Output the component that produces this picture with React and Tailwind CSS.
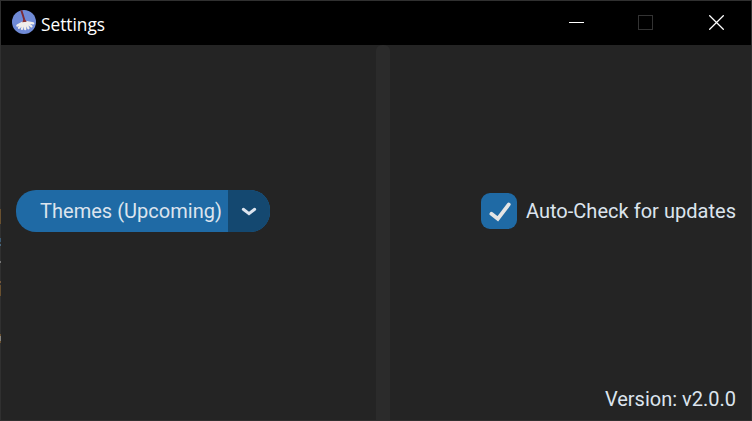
import React from "react";

function AppIcon() {
  return (
    <svg className="-mt-[2px] h-6 w-6 shrink-0" viewBox="0 0 24 24">
      <circle cx="12" cy="12" r="12" fill="#6f8ad6" />
      <path
        d="M11 12.6L5.4 15.6M11.4 13L7 17.8M12 13L10 18.8M13 13L13.2 19.2M14 13L16.4 18.2M14.6 12.6L19.4 16.4M14.6 12.2L21.2 13.4"
        stroke="#efedeb"
        strokeWidth="2.3"
        strokeLinecap="round"
        fill="none"
      />
      <path d="M9.3 0.4 L11 5.5 L12.6 11" stroke="#7c2a35" strokeWidth="1.9" fill="none" />
      <path d="M10.2 12.2 L12 8.6 L14.8 11.8 Z" fill="#8b3033" />
    </svg>
  );
}

function TitleBar() {
  return (
    <header className="flex h-11 shrink-0 items-center bg-black pl-[11px]">
      <AppIcon />
      <h1 className="ml-[5px] mt-[3px] grow font-['Open_Sans',sans-serif] text-[17.3px] leading-6 text-white">
        Settings
      </h1>
      <div className="flex">
        <button aria-label="Minimize" className="flex h-11 w-[65px] items-center justify-center">
          <svg className="-mt-px h-[15px] w-[15px]" viewBox="0 0 15 15" shapeRendering="crispEdges">
            <path d="M0 7.5H15" stroke="#fff" />
          </svg>
        </button>
        <button aria-label="Maximize" className="flex h-11 w-[73px] items-center justify-center">
          <svg className="-mt-px h-[15px] w-[15px]" viewBox="0 0 15 15" shapeRendering="crispEdges">
            <rect x="0.5" y="0.5" width="14" height="14" fill="none" stroke="#333" />
          </svg>
        </button>
        <button aria-label="Close" className="flex h-11 w-[69px] items-center justify-center">
          <svg className="-mt-px h-[15px] w-[15px]" viewBox="0 0 15 15">
            <path d="M0.3 0.3L14.7 14.7M14.7 0.3L0.3 14.7" stroke="#fff" strokeWidth="1.25" />
          </svg>
        </button>
      </div>
    </header>
  );
}

function ThemeMenu() {
  return (
    <button className="flex h-[42px] w-[254px] overflow-hidden rounded-[20px] bg-[#1f6aa5] text-[#dce4ee]">
      <span className="flex h-full w-[212px] items-center whitespace-nowrap pl-6 text-xl tracking-[0.03px]">
        Themes (Upcoming)
      </span>
      <span className="flex h-full w-[42px] items-center justify-center bg-[#144870]">
        <svg className="mt-[2px] h-[10px] w-4" viewBox="0 0 16 10">
          <path
            d="M2.3 2.3L8 6.6L13.7 2.3"
            fill="none"
            stroke="#dce4ee"
            strokeWidth="3"
            strokeLinecap="round"
            strokeLinejoin="miter"
          />
        </svg>
      </span>
    </button>
  );
}

function UpdateCheckbox() {
  return (
    <label className="flex items-center gap-[9px]">
      <span className="flex h-9 w-9 items-center justify-center rounded-[9px] bg-[#1f6aa5]">
        <svg className="h-9 w-9" viewBox="0 0 36 36">
          <path
            d="M10.4 20.8L16.8 25.8L27.8 11.4"
            fill="none"
            stroke="#e5e5e5"
            strokeWidth="3.8"
            strokeLinecap="round"
          />
        </svg>
      </span>
      <span className="whitespace-nowrap text-xl tracking-[0.03px]">Auto-Check for updates</span>
    </label>
  );
}

// Slivers of the window behind that show through the left frame edge.
function LeftEdge() {
  return (
    <div className="flex w-px shrink-0 flex-col bg-[#303030]">
      <i className="mt-[209px] h-[15px] bg-[#69502f]" />
      <i className="mt-[14px] h-1 bg-[#3c5a72]" />
      <i className="mt-[2px] h-[2px] bg-[#49677d]" />
      <i className="mt-[15px] h-[2px] bg-[#777]" />
      <i className="mt-[18px] h-[2px] bg-[#76583b]" />
      <i className="mt-[2px] h-[11px] bg-[#69502f]" />
      <i className="mt-[38px] h-[2px] bg-[#69502f]" />
      <i className="h-[5px] bg-[#85827c]" />
      <i className="h-[2px] bg-[#69502f]" />
    </div>
  );
}

export default function App() {
  return (
    <div className="flex h-[421px] w-[752px] overflow-hidden bg-[#242424] font-[Roboto,sans-serif] text-[#dce4ee]">
      <LeftEdge />
      <div className="flex min-w-0 grow flex-col border-y border-r border-[#303030]">
        <TitleBar />
        <main className="flex min-h-0 grow">
          <section className="flex w-[375px] shrink-0 flex-col pl-[15px] pt-[145px]">
            <ThemeMenu />
          </section>
          <div className="w-[14px] shrink-0 rounded-t-[6px] bg-[#2b2b2b]" />
          <section className="flex grow flex-col items-end justify-between pb-[7px] pr-[15px] pt-[148px]">
            <UpdateCheckbox />
            <p className="text-xl">Version: v2.0.0</p>
          </section>
        </main>
      </div>
    </div>
  );
}
